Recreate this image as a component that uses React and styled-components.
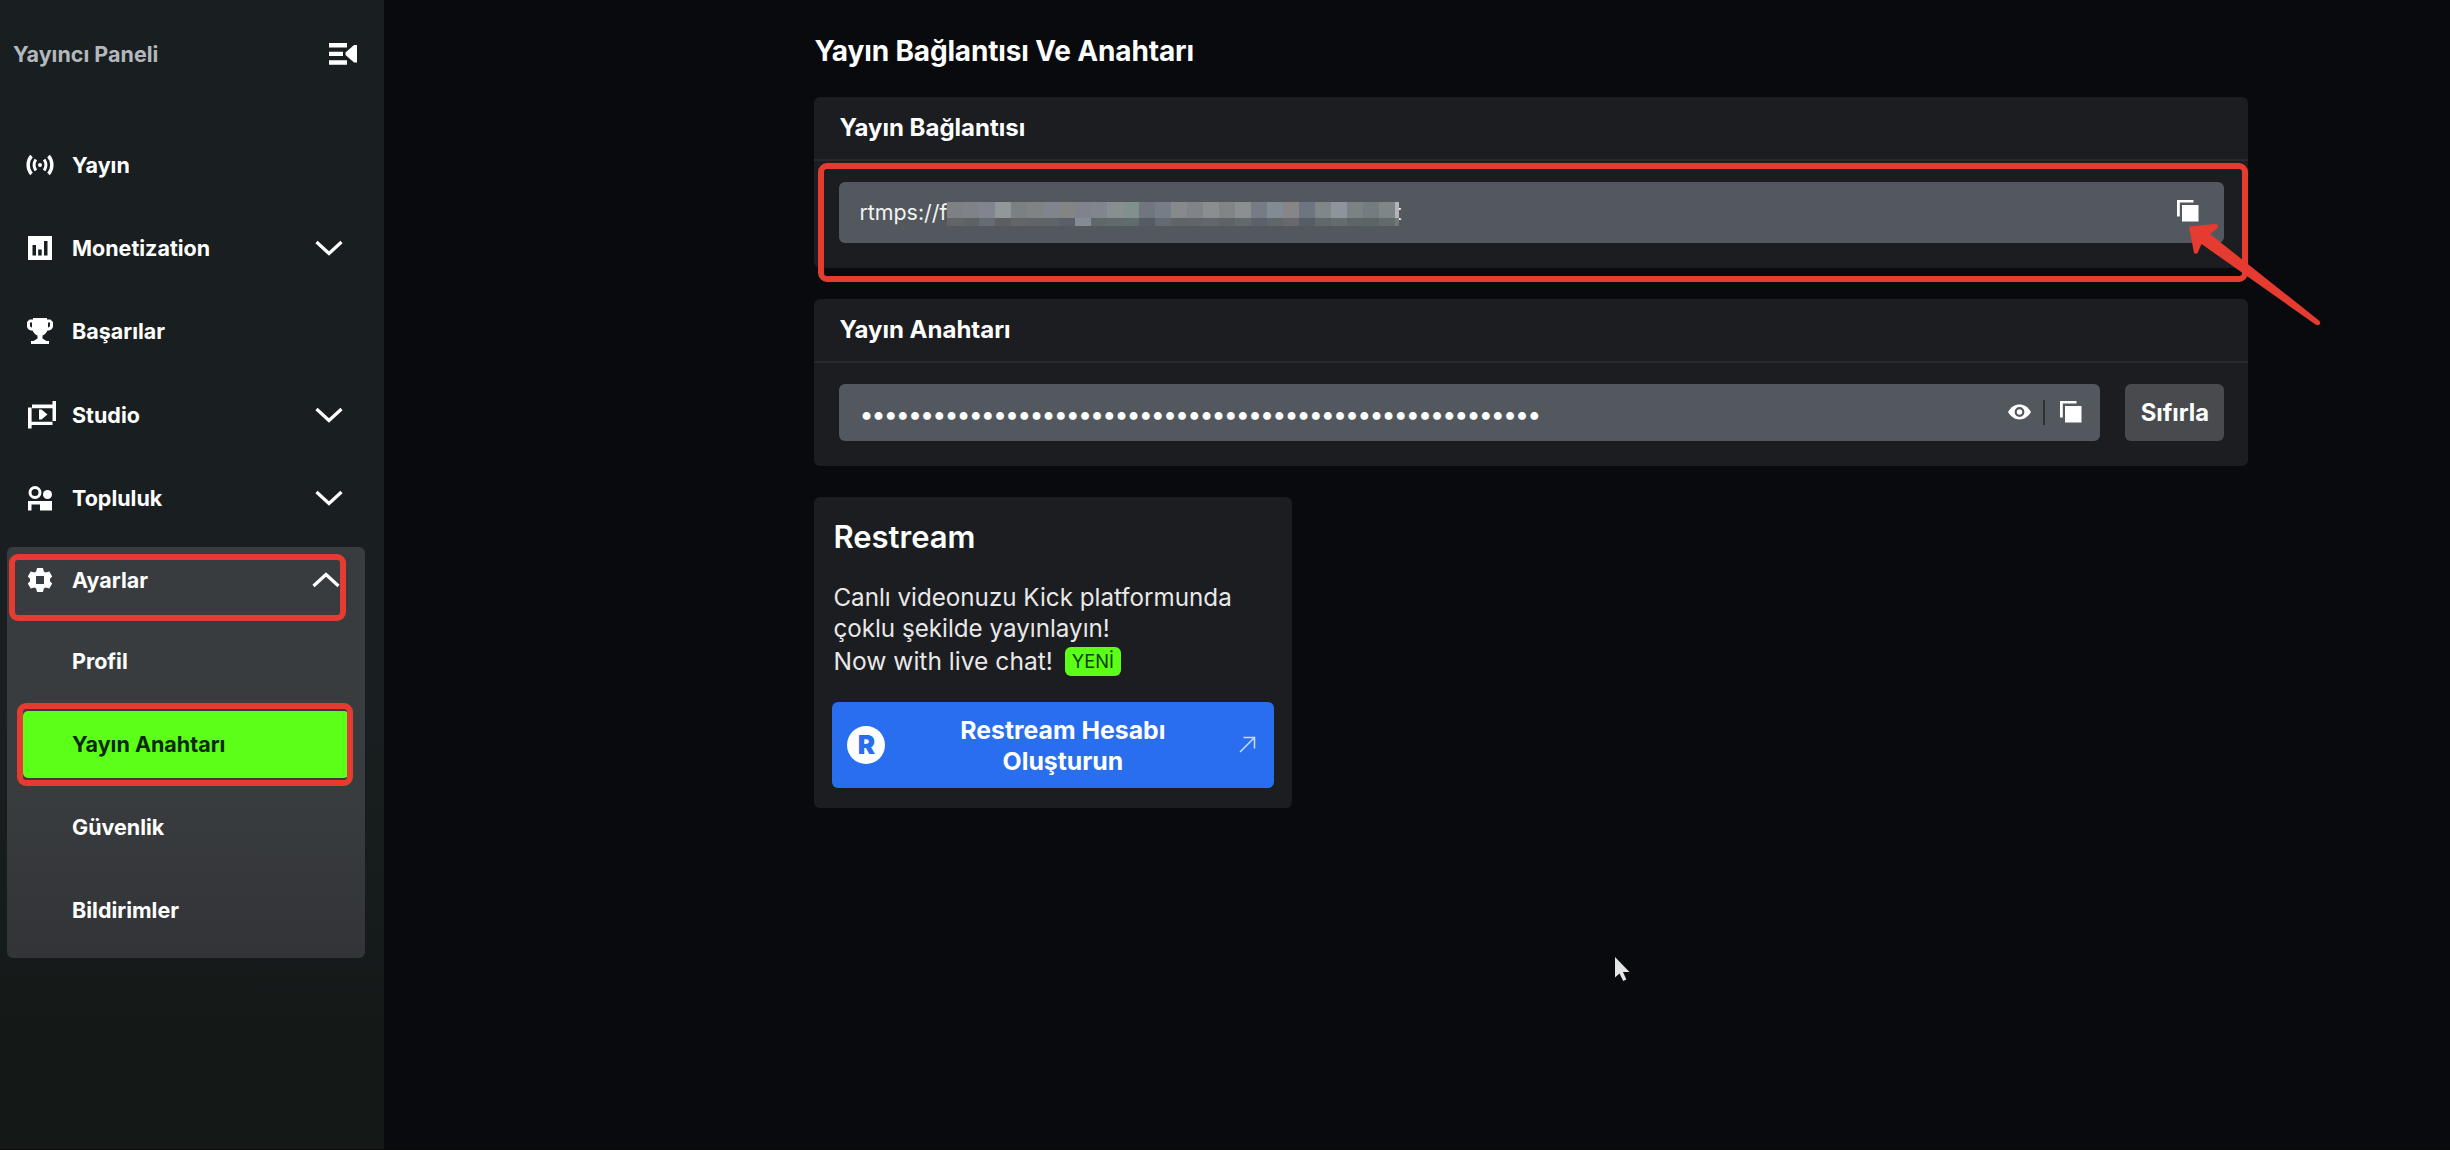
/* eslint-disable react/prop-types */
import styled, { createGlobalStyle } from "styled-components";

const GlobalStyle = createGlobalStyle`
  *, *::before, *::after {
    box-sizing: border-box;
    margin: 0;
    padding: 0;
  }

  body {
    background-color: #090a0d;
    color: #fff;
    font-family: Inter, "Liberation Sans", sans-serif;
    overflow: hidden;
  }

  svg {
    display: block;
    flex-shrink: 0;
  }

  button {
    border: none;
    background: none;
    color: inherit;
    font-family: inherit;
  }
`;

const Layout = styled.div`
  position: relative;
  display: grid;
  grid-template-columns: 384px 1fr;
  height: 1150px;
  border-bottom: 1px solid #08090a;
`;

/* ---------- sidebar ---------- */

const Sidebar = styled.aside`
  background: linear-gradient(#191e20 0%, #191e20 62%, #141918 90%, #141918 100%);
`;

const SidebarHeader = styled.div`
  display: flex;
  align-items: center;
  justify-content: space-between;
  height: 108px;
  padding: 0 27px 0 13px;
`;

const SidebarTitle = styled.h2`
  font-size: 21.5px;
  font-weight: 700;
  color: #b3b8bc;
`;

const Nav = styled.nav`
  display: flex;
  flex-direction: column;
  padding-top: 15px;
`;

const NavItem = styled.a`
  display: flex;
  align-items: center;
  gap: 18px;
  height: 83.3px;
  padding: 0 41px 0 26px;
  font-size: 21.5px;
  font-weight: 700;

  span {
    flex: 1;
  }
`;

const NavGroup = styled.div`
  margin: 7.5px 0 0 7px;
  width: 358px;
  height: 411px;
  border-radius: 6px;
  background: linear-gradient(#393c3f 0%, #393c3f 60%, #323437 100%);

  ${NavItem} {
    height: 67px;
    padding: 0 25px 0 19px;
  }
`;

const SubItem = styled.a`
  display: flex;
  align-items: center;
  height: 67px;
  margin: 0 16px 16px;
  padding-left: 49px;
  border-radius: 5px;
  font-size: 21.5px;
  font-weight: 700;
  color: ${({ $active }) => ($active ? "#0a2a05" : "#fff")};
  background-color: ${({ $active }) => ($active ? "#5bff17" : "transparent")};
`;

const SubList = styled.div`
  padding-top: 14px;
`;

/* ---------- content ---------- */

const Main = styled.main`
  width: 1434px;
  margin-left: 430.4px;
  padding-top: 31px;
`;

const Title = styled.h1`
  height: 66px;
  font-size: 28px;
  line-height: 40px;
  font-weight: 700;
  letter-spacing: -0.15px;
`;

const Card = styled.section`
  height: ${({ $height }) => $height}px;
  margin-bottom: 31px;
  border-radius: 6px;
  background-color: #1c1d20;
`;

const CardHeader = styled.h3`
  height: 64px;
  padding-left: 25px;
  border-bottom: 2px solid #27292c;
  font-size: 24px;
  line-height: 62px;
  font-weight: 700;
`;

const CardBody = styled.div`
  display: flex;
  gap: 25px;
  padding: 21px 24px 0 25px;
`;

const Field = styled.div`
  display: flex;
  align-items: center;
  flex: 1;
  height: ${({ $height }) => $height}px;
  padding: 0 ${({ $right }) => $right}px 0 20px;
  border-radius: 6px;
  background-color: #52585e;
`;

const Address = styled.span`
  font-size: 21.4px;
  color: #f2f3f3;
`;

const Spacer = styled.div`
  flex: 1;
`;

const Mosaic = styled.div`
  position: relative;
  display: grid;
  grid-template-columns: repeat(28, 16px) 4px;
  grid-template-rows: 16px 8px;
  margin-top: 4px;
`;

const Tile = styled.i`
  background-color: ${({ $color }) => $color};
`;

const LastLetter = styled(Address)`
  margin-left: -5px;
`;

const Dots = styled.span`
  padding-top: 3px;
  font-size: 25px;
  letter-spacing: -1.92px;
`;

const CopySlot = styled.div`
  padding-bottom: ${({ $lift }) => $lift}px;
`;

const FieldDivider = styled.div`
  width: 2px;
  height: 25px;
  margin: 0 15px 0 12px;
  background-color: #2c3136;
`;

const ResetButton = styled.button`
  width: 99px;
  height: 56.5px;
  border-radius: 6px;
  background-color: #484a4d;
  font-size: 23.8px;
  font-weight: 700;
`;

const RestreamCard = styled(Card)`
  width: 478px;
  padding: 20px 18px;
`;

const RestreamTitle = styled.h2`
  padding-left: 1px;
  font-size: 31px;
  line-height: 40px;
  font-weight: 600;
`;

const Description = styled.p`
  margin-top: 25px;
  padding-left: 1px;
  font-size: 24.2px;
  line-height: 31px;
  color: #e8e8e9;
`;

const LiveRow = styled.div`
  display: flex;
  align-items: center;
  gap: 12px;
  height: 35px;
  padding-left: 1px;
  font-size: 24.6px;
  color: #e8e8e9;
`;

const Badge = styled.span`
  width: 56px;
  height: 29px;
  border-radius: 6px;
  background-color: #5bff17;
  color: #0d3d08;
  font-size: 18.3px;
  line-height: 28px;
  text-align: center;
`;

const RestreamButton = styled.button`
  display: flex;
  align-items: center;
  width: 442px;
  height: 86px;
  margin-top: 23px;
  padding: 0 18px 0 15px;
  border-radius: 6px;
  background-color: #286eee;
  font-size: 24.8px;
  line-height: 31px;
  font-weight: 700;

  span {
    flex: 1;
    padding: 2px 0 0 1px;
  }
`;

const RestreamLogo = styled.div`
  width: 38px;
  height: 38px;
  border-radius: 50%;
  background-color: #fff;
  color: #286eee;
  font-size: 26px;
  line-height: 38px;
  font-weight: 900;
`;

/* ---------- marks over the page ---------- */

const Highlight = styled.div`
  position: absolute;
  left: ${({ $x }) => $x}px;
  top: ${({ $y }) => $y}px;
  width: ${({ $w }) => $w}px;
  height: ${({ $h }) => $h}px;
  border: 6px solid #e63b31;
  border-radius: 9px;
`;

const Overlay = styled.svg`
  position: absolute;
  left: ${({ $x }) => $x}px;
  top: ${({ $y }) => $y}px;
`;

/* ---------- icons ---------- */

const CollapseIcon = () => (
  <svg width="28" height="22" viewBox="0 0 28 22" fill="#fff">
    <path d="M0 0h18v4.5H0zM0 8.7h14v4.4H0zM0 17.3h18v4.5H0z" />
    <path d="M28 2v17.5h-3L16.5 12V9.500L25 2z" />
  </svg>
);

const LiveIcon = () => (
  <svg width="28" height="28" viewBox="0 0 28 28" fill="none" stroke="#fff" strokeWidth="3.4">
    <path d="M5.5 5C1 10 1 18 5.5 23M22.5 5C27 10 27 18 22.5 23" />
    <path d="M9.8 8.5C7.6 12 7.6 16 9.8 19.5M18.2 8.5C20.4 12 20.4 16 18.2 19.5" strokeWidth="3" />
    <circle cx="14" cy="14" r="2" fill="#fff" stroke="none" />
  </svg>
);

const ChartIcon = () => (
  <svg width="28" height="28" viewBox="0 0 28 28">
    <path fill="#fff" d="M2 2h24v24H2z" />
    <path fill="#191e20" d="M6.500 11H10v10.500H6.500zM12.200 15.500h3.500v6h-3.500zM18 7h3.500v14.500H18z" />
  </svg>
);

const TrophyIcon = () => (
  <svg width="28" height="28" viewBox="0 0 28 28" fill="#fff">
    <path
      fillRule="evenodd"
      d="M7 1h14v1.500h3.500L27 5v4c0 2.500-2 4.500-5.500 4.500C20 16.500 18 18 16.500 18.500v3l4 2.500H23v3H5v-3h2.500l4-2.500v-3C10 18 8 16.500 6.500 13.500 3 13.500 1 11.500 1 9V5l2.500-2.500H7zM6 5.500H4v3c0 1 .8 1.700 2 2zM22 5.500v5c1.200-.3 2-1 2-2v-3z"
    />
  </svg>
);

const StudioIcon = () => (
  <svg width="30" height="28" viewBox="0 0 30 28" fill="#fff">
    <path d="M6 3.500h21v3.700H6zM26.500 0H30v20h-3.500zM2 6.500h3.600V27.500H2zM5 20.700h21.500V24H5z" />
    <path d="M13 8.500h2.500l6 5-6 5H13z" />
  </svg>
);

const CommunityIcon = () => (
  <svg width="28" height="28" viewBox="0 0 28 28" fill="#fff">
    <circle cx="9" cy="8.500" r="5" fill="none" stroke="#fff" strokeWidth="3" />
    <circle cx="21.500" cy="10.500" r="4.500" />
    <path d="M2 17h24v9.500H14v-6H5.500v6H2z" />
  </svg>
);

const GearIcon = () => (
  <svg width="28" height="28" viewBox="0 0 28 28" fill="#fff">
    <path
      fillRule="evenodd"
      d="M11 2h6l.8 3.500 2 1.100 3.500-1.100 2.900 5-2.200 2.300v2.400l2.200 2.300-2.900 5-3.500-1.100-2 1.100L17 26h-6l-.8-3.500-2-1.100-3.500 1.100-2.900-5L4 15.200v-2.400L1.800 10.500l2.900-5 3.500 1.100 2-1.100zM10 10v8h8v-8z"
    />
  </svg>
);

const Chevron = ({ up }) => (
  <svg width="28" height="16" viewBox="0 0 28 16" fill="none" stroke="#fff" strokeWidth="3.2">
    <path d={up ? "M1.500 14 14 2.500 26.500 14" : "M1.500 2 14 13.500 26.500 2"} />
  </svg>
);

const CopyIcon = () => (
  <svg width="22" height="22" viewBox="0 0 22 22" fill="#fff">
    <path d="M0 0h16.500v2.500H2.800v14H0zM5 5h16.500v16.500H5z" />
  </svg>
);

const EyeIcon = () => (
  <svg width="23" height="16" viewBox="0 0 23 16">
    <path fill="#fff" d="M0 8C3 3 7 .6 11.500.6S20 3 23 8c-3 5-7 7.400-11.500 7.400S3 13 0 8z" />
    <circle cx="11.500" cy="8" r="3.800" fill="none" stroke="#52585e" strokeWidth="2.200" />
  </svg>
);

const LinkArrow = () => (
  <svg width="17" height="17" viewBox="0 0 17 17" fill="none" stroke="#c9dcfb" strokeWidth="1.5">
    <path d="M1 16 15.500 1.500M4.500 1.500h11v11" />
  </svg>
);

const navItems = [
  { label: "Yayın", icon: <LiveIcon /> },
  { label: "Monetization", icon: <ChartIcon />, expandable: true },
  { label: "Başarılar", icon: <TrophyIcon /> },
  { label: "Studio", icon: <StudioIcon />, expandable: true, wide: true },
  { label: "Topluluk", icon: <CommunityIcon />, expandable: true },
];

const IconBox = styled.div`
  width: 28px;
`;

const settings = ["Profil", "Yayın Anahtarı", "Güvenlik", "Bildirimler"];

// two rows of 29 tiles that censor the server address
const tiles = [
  "#7e8184", "#7f8389", "#80858f", "#929799", "#7b8182", "#808383", "#7f858c", "#838484",
  "#7f838b", "#80868e", "#878f90", "#80908c", "#70757e", "#757d86", "#868a8c", "#808489",
  "#8a8e90", "#818586", "#8a8f91", "#757c86", "#818b92", "#868689", "#6e7480", "#7f8788",
  "#8d949c", "#7a8284", "#737c7e", "#7e8688", "#b0b7bb",
  "#616567", "#5d6265", "#666b74", "#5b5f62", "#626667", "#606466", "#5f646b", "#586069",
  "#858a95", "#5f6869", "#606a6c", "#606c6b", "#565c66", "#636a73", "#5f6468", "#606569",
  "#62676b", "#5e6367", "#62686b", "#5b626b", "#606768", "#68696c", "#565d69", "#606869",
  "#646c6e", "#5d6567", "#5b6565", "#636a6c", "#70787a",
];

function App() {
  return (
    <>
      <GlobalStyle />
      <Layout>
        <Sidebar>
          <SidebarHeader>
            <SidebarTitle>Yayıncı Paneli</SidebarTitle>
            <CollapseIcon />
          </SidebarHeader>
          <Nav>
            {navItems.map(({ label, icon, expandable }) => (
              <NavItem key={label}>
                <IconBox>{icon}</IconBox>
                <span>{label}</span>
                {expandable && <Chevron />}
              </NavItem>
            ))}
            <NavGroup>
              <NavItem>
                <IconBox>
                  <GearIcon />
                </IconBox>
                <span>Ayarlar</span>
                <Chevron up />
              </NavItem>
              <SubList>
                {settings.map((label) => (
                  <SubItem key={label} $active={label === "Yayın Anahtarı"}>
                    {label}
                  </SubItem>
                ))}
              </SubList>
            </NavGroup>
          </Nav>
        </Sidebar>

        <Main>
          <Title>Yayın Bağlantısı Ve Anahtarı</Title>
          <Card $height={171}>
            <CardHeader>Yayın Bağlantısı</CardHeader>
            <CardBody>
              <Field $height={60.5} $right={25}>
                <Address>rtmps://f</Address>
                <Mosaic>
                  {tiles.map((color, i) => (
                    <Tile key={i} $color={color} />
                  ))}
                </Mosaic>
                <LastLetter>t</LastLetter>
                <Spacer />
                <CopySlot $lift={3}>
                  <CopyIcon />
                </CopySlot>
              </Field>
            </CardBody>
          </Card>
          <Card $height={166.5}>
            <CardHeader>Yayın Anahtarı</CardHeader>
            <CardBody>
              <Field $height={56.5} $right={18}>
                <Dots>{"•".repeat(56)}</Dots>
                <Spacer />
                <EyeIcon />
                <FieldDivider />
                <CopySlot $lift={1}>
                  <CopyIcon />
                </CopySlot>
              </Field>
              <ResetButton>Sıfırla</ResetButton>
            </CardBody>
          </Card>
          <RestreamCard $height={311.5}>
            <RestreamTitle>Restream</RestreamTitle>
            <Description>
              Canlı videonuzu Kick platformunda
              <br />
              çoklu şekilde yayınlayın!
            </Description>
            <LiveRow>
              Now with live chat!
              <Badge>YENİ</Badge>
            </LiveRow>
            <RestreamButton>
              <RestreamLogo>R</RestreamLogo>
              <span>
                Restream Hesabı
                <br />
                Oluşturun
              </span>
              <LinkArrow />
            </RestreamButton>
          </RestreamCard>
        </Main>

        <Highlight $x={9} $y={554} $w={336.5} $h={67} />
        <Highlight $x={16.5} $y={703} $w={336.5} $h={82.5} />
        <Highlight $x={818} $y={163} $w={1429.5} $h={119} />
        <Overlay $x={2180} $y={216} width="150" height="120" fill="#e63b31">
          <path d="M9 10.500 35 8c3-.2 4 2.500 2 4.500l-7 5.500 109 86.500c3 2.500 0 6.500-3.500 4L21.500 28l-3.700 8.500c-1 2-3.500 1.500-4-.5z" />
        </Overlay>
        <Overlay $x={1614} $y={956} width="18" height="26" fill="#e4e4e6">
          <path d="M1 1v20.500l4.500-4 3.700 7.500 3.200-1.500L9 16h6.500z" />
        </Overlay>
      </Layout>
    </>
  );
}

export default App;
